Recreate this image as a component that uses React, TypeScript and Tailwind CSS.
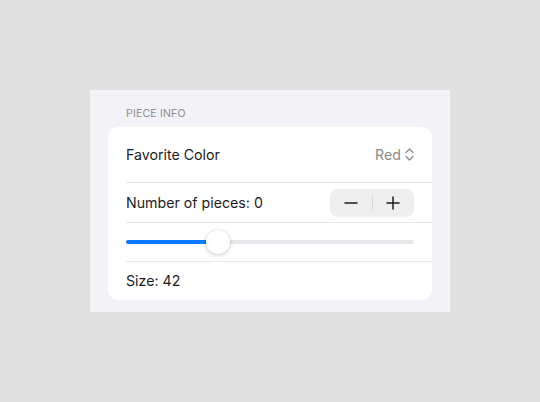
import React from 'react';

const Divider = () => <div className="ml-[18px] h-px bg-[#e5e5ea]" />;

export default function App() {
  const value = 32;
  return (
    <div className="w-[540px] h-[402px] bg-[#e0e0e0] flex items-start justify-center pt-[90px]" style={{ fontFamily: 'Inter, "Noto Sans", sans-serif' }}>
      <div className="w-[360px] h-[222px] bg-[#f2f2f7] px-[18px] pt-[17px]">
        <div className="pl-[18px] text-[10.5px] leading-[13px] text-[#8e8e93] tracking-[0.2px]">PIECE INFO</div>
        <div className="mt-[7px] bg-white rounded-[10px] overflow-hidden">
          <div className="h-[55px] flex items-center justify-between pl-[18px] pr-[18px] text-[14.2px] text-[#1c1c1e]">
            <span>Favorite Color</span>
            <span className="flex items-center gap-[4px] text-[#8a8a8e]">
              Red
              <svg width="9" height="13" viewBox="0 0 9 13" fill="none" stroke="#8a8a8e" strokeWidth="1.3" strokeLinecap="round" strokeLinejoin="round">
                <path d="M1 4.5 L4.5 1 L8 4.5" />
                <path d="M1 8.5 L4.5 12 L8 8.5" />
              </svg>
            </span>
          </div>
          <Divider />
          <div className="h-[39px] flex items-center justify-between pl-[18px] pr-[18px] text-[14.2px] text-[#1c1c1e]">
            <span>Number of pieces: 0</span>
            <div className="w-[84px] h-[28px] rounded-[8px] bg-[#eeeeef] flex items-center">
              <div className="flex-1 flex items-center justify-center">
                <svg width="14" height="14" viewBox="0 0 14 14" stroke="#1c1c1e" strokeWidth="1.5" strokeLinecap="round">
                  <path d="M1 7 H13" />
                </svg>
              </div>
              <div className="w-px h-[16px] bg-[#d8d8dc]" />
              <div className="flex-1 flex items-center justify-center">
                <svg width="14" height="14" viewBox="0 0 14 14" stroke="#1c1c1e" strokeWidth="1.5" strokeLinecap="round">
                  <path d="M1 7 H13 M7 1 V13" />
                </svg>
              </div>
            </div>
          </div>
          <Divider />
          <div className="h-[38px] flex items-center pl-[18px] pr-[18px]">
            <div className="relative w-full h-[4px] rounded-full bg-[#e5e5ea]">
              <div className="absolute left-0 top-0 h-full rounded-full bg-[#0a7aff]" style={{ width: `${value}%` }} />
              <div className="absolute top-1/2 w-[24px] h-[24px] -translate-x-1/2 -translate-y-1/2 rounded-full bg-white shadow-[0_1px_4px_rgba(0,0,0,0.22),0_0_1px_rgba(0,0,0,0.12)]" style={{ left: `${value}%` }} />
            </div>
          </div>
          <Divider />
          <div className="h-[38px] flex items-center pl-[18px] text-[14.2px] text-[#1c1c1e]">Size: 42</div>
        </div>
      </div>
    </div>
  );
}
